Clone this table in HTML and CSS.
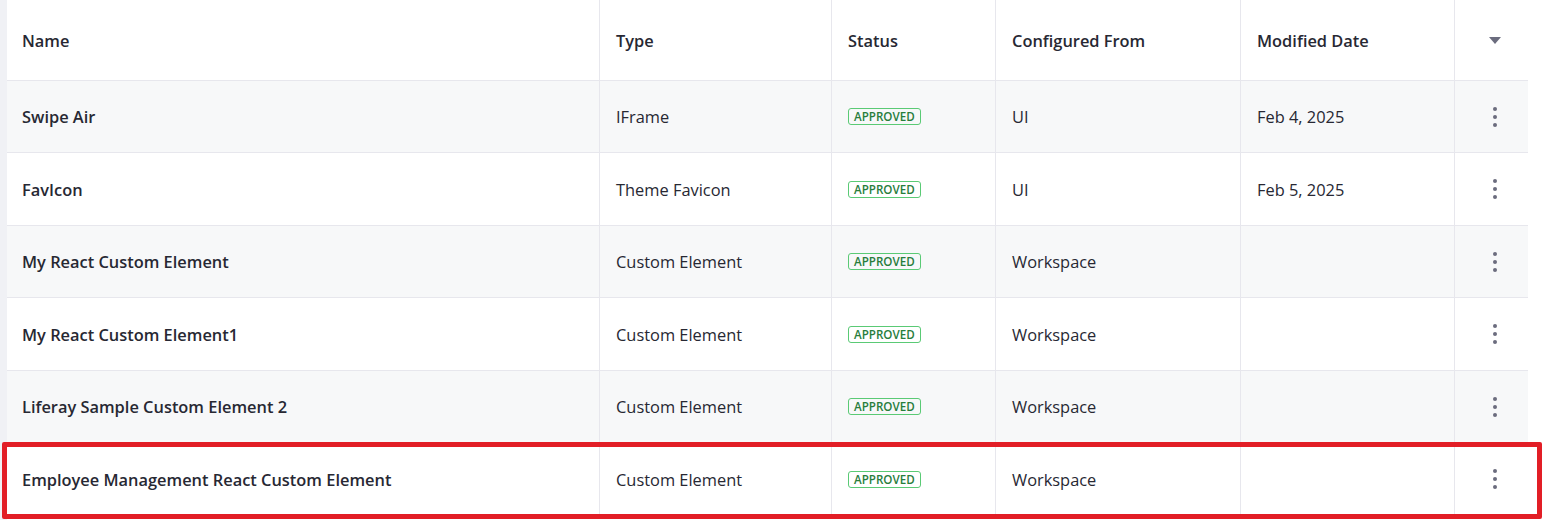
FILE: index.html
```html
<!DOCTYPE html>
<html lang="en">
<head>
<meta charset="utf-8">
<title>Client Extensions</title>
<link rel="stylesheet" href="styles.css">
</head>
<body>
<div class="page">
  <div class="gutter"></div>
  <div class="table">
    <div class="row head">
      <div class="cell first">Name</div>
      <div class="cell">Type</div>
      <div class="cell">Status</div>
      <div class="cell">Configured From</div>
      <div class="cell">Modified Date</div>
      <div class="cell action"><svg class="caret" width="12" height="7" viewBox="0 0 12 7"><path d="M0 0h12L6 7z" fill="#6b6c7e"/></svg></div>
    </div>
    <div class="row alt h72">
      <div class="cell first name">Swipe Air</div>
      <div class="cell">IFrame</div>
      <div class="cell"><span class="badge">APPROVED</span></div>
      <div class="cell">UI</div>
      <div class="cell">Feb 4, 2025</div>
      <div class="cell action"><span class="kebab"><i></i><i></i><i></i></span></div>
    </div>
    <div class="row h73">
      <div class="cell first name">FavIcon</div>
      <div class="cell">Theme Favicon</div>
      <div class="cell"><span class="badge">APPROVED</span></div>
      <div class="cell">UI</div>
      <div class="cell">Feb 5, 2025</div>
      <div class="cell action"><span class="kebab"><i></i><i></i><i></i></span></div>
    </div>
    <div class="row alt h72">
      <div class="cell first name">My React Custom Element</div>
      <div class="cell">Custom Element</div>
      <div class="cell"><span class="badge">APPROVED</span></div>
      <div class="cell">Workspace</div>
      <div class="cell"></div>
      <div class="cell action"><span class="kebab"><i></i><i></i><i></i></span></div>
    </div>
    <div class="row h73">
      <div class="cell first name">My React Custom Element1</div>
      <div class="cell">Custom Element</div>
      <div class="cell"><span class="badge">APPROVED</span></div>
      <div class="cell">Workspace</div>
      <div class="cell"></div>
      <div class="cell action"><span class="kebab"><i></i><i></i><i></i></span></div>
    </div>
    <div class="row alt h72">
      <div class="cell first name">Liferay Sample Custom Element 2</div>
      <div class="cell">Custom Element</div>
      <div class="cell"><span class="badge">APPROVED</span></div>
      <div class="cell">Workspace</div>
      <div class="cell"></div>
      <div class="cell action"><span class="kebab"><i></i><i></i><i></i></span></div>
    </div>
    <div class="row h73 last">
      <div class="cell first name">Employee Management React Custom Element</div>
      <div class="cell">Custom Element</div>
      <div class="cell"><span class="badge">APPROVED</span></div>
      <div class="cell">Workspace</div>
      <div class="cell"></div>
      <div class="cell action"><span class="kebab"><i></i><i></i><i></i></span></div>
    </div>
  </div>
  <div class="highlight"></div>
</div>
</body>
</html>
```

FILE: styles.css
```css
* { box-sizing: border-box; }
html, body { margin: 0; padding: 0; background: #fff; }
body {
  font-family: "Open Sans", "Noto Sans", sans-serif;
  font-size: 16.4px;
  color: #272833;
  width: 1542px;
  height: 520px;
  overflow: hidden;
}
.page {
  position: relative;
  display: flex;
  height: 520px;
}
.gutter {
  width: 7px;
  flex: none;
  background: #f0f1f5;
}
.table {
  width: 1521px;
  flex: none;
  display: flex;
  flex-direction: column;
  background: #fff;
  border-top-left-radius: 4px;
}
.row {
  display: grid;
  grid-template-columns: 592px 232px 164px 245px 214px 74px;
  border-bottom: 1px solid #e7e7ed;
}
.row.head { height: 81px; font-weight: 600; }
.row.h72 { height: 72px; }
.row.h73 { height: 73px; }
.row.alt { background: #f7f8f9; }
.cell {
  display: flex;
  align-items: center;
  padding-left: 16px;
  border-left: 1px solid #e7e7ed;
  white-space: nowrap;
}
.cell.first { border-left: none; padding-left: 15px; }
.name { font-weight: 600; }
.cell.action { justify-content: center; padding-left: 7px; }
.badge {
  display: inline-block;
  border: 1px solid #5aca75;
  border-radius: 3px;
  color: #287d3c;
  font-size: 11.6px;
  font-weight: 600;
  line-height: 15px;
  padding: 0 5px;
}
.kebab {
  display: flex;
  flex-direction: column;
  gap: 4px;
}
.kebab i {
  display: block;
  width: 4px;
  height: 4px;
  border-radius: 50%;
  background: #6b6c7e;
}
.caret { display: block; }
.highlight {
  position: absolute;
  left: 2px;
  top: 442px;
  width: 1540px;
  height: 77px;
  border: 5px solid #e21e26;
  border-radius: 2px;
  pointer-events: none;
}
```
